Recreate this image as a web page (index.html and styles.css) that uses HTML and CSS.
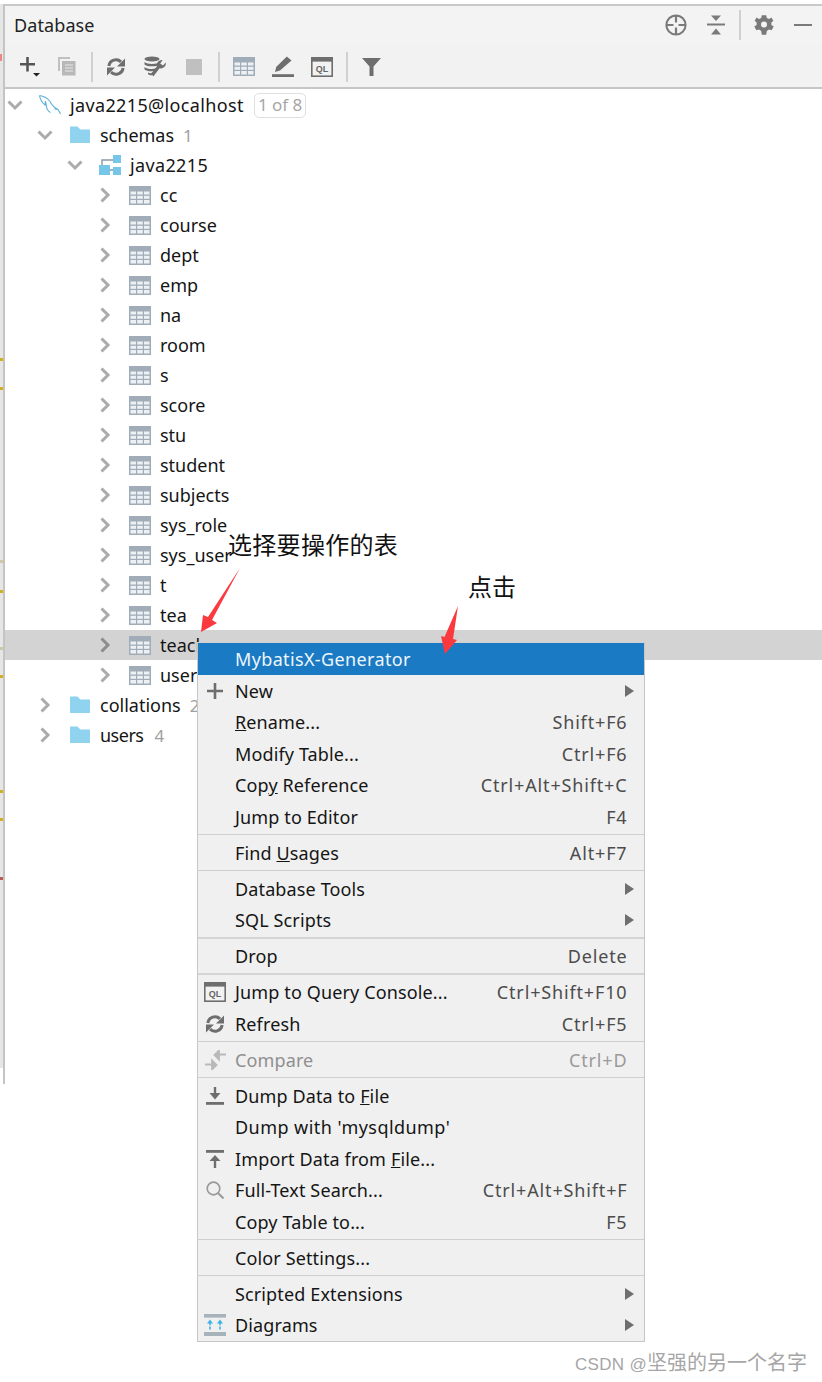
FILE: index.html
```html
<!DOCTYPE html>
<html lang="zh-CN">
<head>
<meta charset="utf-8">
<title>Database</title>
<link rel="stylesheet" href="styles.css">
</head>
<body>
<svg class="defs" width="0" height="0" aria-hidden="true">
  <defs>
    <symbol id="chev-r" viewBox="0 0 20 20"><path d="M6.5 3.5 L13 10 L6.5 16.5" fill="none" stroke="currentColor" stroke-width="3"/></symbol>
    <symbol id="chev-d" viewBox="0 0 20 20"><path d="M3.5 6.5 L10 13 L16.5 6.5" fill="none" stroke="currentColor" stroke-width="3"/></symbol>
    <symbol id="folder" viewBox="0 0 20 20"><path d="M-1 1.5 H7.5 L10.5 4.5 H21 V18 H-1 Z" fill="#8fd3ee"/></symbol>
    <symbol id="schema" viewBox="0 0 22 20"><path d="M14 0 H22 V8 H14 Z M0 10 H11 V20 H0 Z M14 12 H22 V20 H14 Z" fill="#75c6e8"/><path d="M3 10 V5 H14 M11 15 H14" fill="none" stroke="#8a98a3" stroke-width="1.4"/></symbol>
    <symbol id="table" viewBox="0 0 22 19"><rect width="22" height="19" fill="#a0adb8"/><g fill="#eef1f3"><rect x="1.5" y="5.5" width="5.5" height="3"/><rect x="8.2" y="5.5" width="5.6" height="3"/><rect x="15" y="5.5" width="5.5" height="3"/><rect x="1.5" y="9.8" width="5.5" height="3"/><rect x="8.2" y="9.8" width="5.6" height="3"/><rect x="15" y="9.8" width="5.5" height="3"/><rect x="1.5" y="14" width="5.5" height="3.5"/><rect x="8.2" y="14" width="5.6" height="3.5"/><rect x="15" y="14" width="5.5" height="3.5"/></g></symbol>
    <symbol id="refresh" viewBox="0 0 18 18"><path d="M1.9 8 A7.2 7.2 0 0 1 14 3.8 M16.1 10 A7.2 7.2 0 0 1 4 14.2" fill="none" stroke="currentColor" stroke-width="3"/><path d="M10 8.6 H18 V0.6 Z M8 9.4 H0 V17.4 Z" fill="currentColor"/></symbol>
    <symbol id="ql" viewBox="0 0 22 20"><rect x="0.8" y="0.8" width="20.4" height="18.4" fill="#f2f2f2" stroke="#6e6e6e" stroke-width="1.6"/><rect x="1" y="1" width="20" height="3.6" fill="#6e6e6e"/><text x="11" y="15" text-anchor="middle" class="ql-text">QL</text></symbol>
  </defs>
</svg>
<div class="screen">
  <div class="gutter">
    <i class="mark mark-red mark-1"></i>
    <i class="mark mark-y mark-2"></i>
    <i class="mark mark-y mark-3"></i>
    <i class="mark mark-t mark-4"></i>
    <i class="mark mark-y mark-5"></i>
    <i class="mark mark-t mark-6"></i>
    <i class="mark mark-y mark-7"></i>
    <i class="mark mark-y mark-8"></i>
    <i class="mark mark-y mark-9"></i>
    <i class="mark mark-dr mark-10"></i>
  </div>
  <main class="panel">
    <header class="title-bar">
      <span class="title">Database</span>
      <div class="title-actions">
        <svg class="ic-target" viewBox="0 0 22 22"><circle cx="11" cy="11" r="9.6" fill="none" stroke="#7a7a7a" stroke-width="2"/><path d="M11 2 V8.5 M11 13.5 V20 M2 11 H8.5 M13.5 11 H20" stroke="#7a7a7a" stroke-width="2.2"/></svg>
        <svg class="ic-collapse" viewBox="0 0 18 20"><path d="M0 9.5 H18" stroke="#7a7a7a" stroke-width="2"/><path d="M4 0.5 H14 L9 6 Z M4 19.5 H14 L9 13.5 Z" fill="#7a7a7a"/></svg>
        <span class="vsep vsep-title"></span>
        <svg class="ic-gear" viewBox="0 0 20 20"><path d="M7.8 0.3 H12.2 L12.8 3 L15 4 L17.4 2.6 L19.4 5.7 L17.4 7.5 V9.9 L19.7 11.6 L17.6 15.3 L15 14.4 L12.8 16 L12.2 19.7 H7.8 L7.2 16 L5 14.4 L2.4 15.3 L0.3 11.6 L2.6 9.9 V7.5 L0.6 5.7 L2.6 2.6 L5 4 L7.2 3 Z" fill="#7a7a7a"/><circle cx="10" cy="9.6" r="3" fill="#f3f3f3"/></svg>
        <span class="minus"></span>
      </div>
    </header>
    <div class="toolbar">
      <svg class="tb tb-plus" viewBox="0 0 20 20"><path d="M0 7.2 H15 M7.5 0 V14.5" stroke="#555" stroke-width="2.6"/><path d="M13 16 H20 L16.5 19.5 Z" fill="#222"/></svg>
      <svg class="tb tb-copy" viewBox="0 0 18 19"><path d="M1 14 V1 H12" fill="none" stroke="#c0c0c0" stroke-width="2"/><rect x="4" y="4" width="13.5" height="14.5" fill="#b8b8b8"/><path d="M7 8 H15 M7 11 H15 M7 14 H15" stroke="#e8e8e8" stroke-width="1.2"/></svg>
      <span class="vsep"></span>
      <svg class="tb tb-refresh"><use href="#refresh"/></svg>
      <svg class="tb tb-tools" viewBox="0 0 23 22"><ellipse cx="8" cy="3" rx="7.5" ry="2.6" fill="#6e6e6e"/><path d="M0.5 6 C3 8.5 13 8.5 15.5 6 V8.4 C13 11 3 11 0.5 8.4 Z M0.5 11 C3 13.4 9 13.4 11.5 12.6 V14.6 C8 15.6 3 15.4 0.5 13.4 Z M4 16.4 C5 17 7 17.4 8.5 17.3 L7.5 19.4 C6 19.2 5 18.8 4 18.2 Z" fill="#6e6e6e"/><path d="M21.8 6.5 A5 5 0 0 1 15.6 12.2 L9.5 20.2 L6.8 18 L13 10.2 A5 5 0 0 1 18.6 4 L16.2 7.4 L19 9.4 Z" fill="#6e6e6e"/></svg>
      <span class="tb-stop"></span>
      <span class="vsep vsep-b"></span>
      <svg class="tb tb-table"><use href="#table"/></svg>
      <svg class="tb tb-pen" viewBox="0 0 22 21"><path d="M14.8 0.5 L19.5 4.5 L8 14.5 L3 16 L4.2 11 Z" fill="#6e6e6e"/><rect y="18.2" width="22" height="2.8" fill="#6e6e6e"/></svg>
      <svg class="tb tb-ql"><use href="#ql"/></svg>
      <span class="vsep vsep-c"></span>
      <svg class="tb tb-filter" viewBox="0 0 19 18"><path d="M0 0 H19 L11.5 8.5 V18 H7.5 V8.5 Z" fill="#6e6e6e"/></svg>
    </div>
    <ul class="tree">
      <li class="row d0"><svg class="chev"><use href="#chev-d"/></svg><svg class="ric ric-db" viewBox="0 0 22 20"><path d="M0.5 0.5 C4 1 8 2.5 11 6.5 C13 10.5 15 12.5 19 14.5 L21.5 19 M19 14.5 L15.5 14 M0.5 0.5 C1 4 3 7.5 6 10 L6.5 6 L8 14 C9 15.5 10 17 11.5 17.5" fill="none" stroke="#5fb4dd" stroke-width="1.15"/></svg><span class="label wide">java2215@localhost</span><span class="badge">1 of 8</span></li>
      <li class="row d1"><svg class="chev"><use href="#chev-d"/></svg><svg class="ric"><use href="#folder"/></svg><span class="label">schemas</span><span class="count">1</span></li>
      <li class="row d2"><svg class="chev"><use href="#chev-d"/></svg><svg class="ric ric-s"><use href="#schema"/></svg><span class="label wide">java2215</span></li>
      <li class="row d3"><svg class="chev"><use href="#chev-r"/></svg><svg class="ric ric-t"><use href="#table"/></svg><span class="label">cc</span></li>
      <li class="row d3"><svg class="chev"><use href="#chev-r"/></svg><svg class="ric ric-t"><use href="#table"/></svg><span class="label">course</span></li>
      <li class="row d3"><svg class="chev"><use href="#chev-r"/></svg><svg class="ric ric-t"><use href="#table"/></svg><span class="label">dept</span></li>
      <li class="row d3"><svg class="chev"><use href="#chev-r"/></svg><svg class="ric ric-t"><use href="#table"/></svg><span class="label">emp</span></li>
      <li class="row d3"><svg class="chev"><use href="#chev-r"/></svg><svg class="ric ric-t"><use href="#table"/></svg><span class="label">na</span></li>
      <li class="row d3"><svg class="chev"><use href="#chev-r"/></svg><svg class="ric ric-t"><use href="#table"/></svg><span class="label">room</span></li>
      <li class="row d3"><svg class="chev"><use href="#chev-r"/></svg><svg class="ric ric-t"><use href="#table"/></svg><span class="label">s</span></li>
      <li class="row d3"><svg class="chev"><use href="#chev-r"/></svg><svg class="ric ric-t"><use href="#table"/></svg><span class="label">score</span></li>
      <li class="row d3"><svg class="chev"><use href="#chev-r"/></svg><svg class="ric ric-t"><use href="#table"/></svg><span class="label">stu</span></li>
      <li class="row d3"><svg class="chev"><use href="#chev-r"/></svg><svg class="ric ric-t"><use href="#table"/></svg><span class="label">student</span></li>
      <li class="row d3"><svg class="chev"><use href="#chev-r"/></svg><svg class="ric ric-t"><use href="#table"/></svg><span class="label">subjects</span></li>
      <li class="row d3"><svg class="chev"><use href="#chev-r"/></svg><svg class="ric ric-t"><use href="#table"/></svg><span class="label">sys_role</span></li>
      <li class="row d3"><svg class="chev"><use href="#chev-r"/></svg><svg class="ric ric-t"><use href="#table"/></svg><span class="label">sys_user</span></li>
      <li class="row d3"><svg class="chev"><use href="#chev-r"/></svg><svg class="ric ric-t"><use href="#table"/></svg><span class="label">t</span></li>
      <li class="row d3"><svg class="chev"><use href="#chev-r"/></svg><svg class="ric ric-t"><use href="#table"/></svg><span class="label">tea</span></li>
      <li class="row d3 selected"><svg class="chev"><use href="#chev-r"/></svg><svg class="ric ric-t"><use href="#table"/></svg><span class="label">teacher</span></li>
      <li class="row d3"><svg class="chev"><use href="#chev-r"/></svg><svg class="ric ric-t"><use href="#table"/></svg><span class="label">user</span></li>
      <li class="row d1"><svg class="chev"><use href="#chev-r"/></svg><svg class="ric"><use href="#folder"/></svg><span class="label">collations</span><span class="count">2</span></li>
      <li class="row d1"><svg class="chev"><use href="#chev-r"/></svg><svg class="ric"><use href="#folder"/></svg><span class="label tight">users</span><span class="count">4</span></li>
    </ul>
  </main>
</div>

<div class="menu">
  <div class="item active"><span class="mi"></span><span class="mt wide">MybatisX-Generator</span></div>
  <div class="item"><span class="mi"><svg class="mi-plus" viewBox="0 0 16 16"><path d="M0 8 H16 M8 0 V16" stroke="#6e6e6e" stroke-width="2.6"/></svg></span><span class="mt">New</span><span class="arrow"></span></div>
  <div class="item"><span class="mi"></span><span class="mt"><u>R</u>ename...</span><span class="sc">Shift+F6</span></div>
  <div class="item"><span class="mi"></span><span class="mt">Modify Table...</span><span class="sc">Ctrl+F6</span></div>
  <div class="item"><span class="mi"></span><span class="mt">Cop<u>y</u> Reference</span><span class="sc">Ctrl+Alt+Shift+C</span></div>
  <div class="item"><span class="mi"></span><span class="mt">Jump to Editor</span><span class="sc">F4</span></div>
  <div class="sep"></div>
  <div class="item"><span class="mi"></span><span class="mt">Find <u>U</u>sages</span><span class="sc">Alt+F7</span></div>
  <div class="sep"></div>
  <div class="item"><span class="mi"></span><span class="mt">Database Tools</span><span class="arrow"></span></div>
  <div class="item"><span class="mi"></span><span class="mt">SQL Scripts</span><span class="arrow"></span></div>
  <div class="sep sep-thick"></div>
  <div class="item"><span class="mi"></span><span class="mt">Drop</span><span class="sc">Delete</span></div>
  <div class="sep sep-thick"></div>
  <div class="item"><span class="mi"><svg class="mi-ql"><use href="#ql"/></svg></span><span class="mt">Jump to Query Console...</span><span class="sc">Ctrl+Shift+F10</span></div>
  <div class="item"><span class="mi"><svg class="mi-refresh"><use href="#refresh"/></svg></span><span class="mt">Refresh</span><span class="sc">Ctrl+F5</span></div>
  <div class="sep"></div>
  <div class="item disabled"><span class="mi"><svg class="mi-compare" viewBox="0 0 21 20"><path d="M21 4.5 H14 M14 0.5 L9.5 5 L14 9.5 Z M0 14.5 H7 M7 10.5 L11.5 15 L7 19.5 Z" stroke="#b9b9b9" stroke-width="1.8" fill="#b9b9b9"/></svg></span><span class="mt">Compare</span><span class="sc">Ctrl+D</span></div>
  <div class="sep"></div>
  <div class="item"><span class="mi"><svg class="mi-io" viewBox="0 0 18 18"><path d="M9 0 V9" stroke="#6e6e6e" stroke-width="2.4"/><path d="M3.5 6 H14.5 L9 12.5 Z" fill="#6e6e6e"/><rect y="15" width="18" height="2.8" fill="#6e6e6e"/></svg></span><span class="mt">Dump Data to <u>F</u>ile</span></div>
  <div class="item"><span class="mi"></span><span class="mt wider">Dump with 'mysqldump'</span></div>
  <div class="item"><span class="mi"><svg class="mi-io" viewBox="0 0 18 18"><rect width="18" height="2.8" fill="#6e6e6e"/><path d="M3.5 11 H14.5 L9 5 Z" fill="#6e6e6e"/><path d="M9 9 V18" stroke="#6e6e6e" stroke-width="2.4"/></svg></span><span class="mt">Import Data from <u>F</u>ile...</span></div>
  <div class="item"><span class="mi"><svg class="mi-io" viewBox="0 0 18 18"><circle cx="7.5" cy="7.5" r="6.3" fill="none" stroke="#9a9a9a" stroke-width="1.7"/><path d="M12 12 L17.5 17.5" stroke="#9a9a9a" stroke-width="2"/></svg></span><span class="mt">Full-Text Search...</span><span class="sc">Ctrl+Alt+Shift+F</span></div>
  <div class="item"><span class="mi"></span><span class="mt">Copy Table to...</span><span class="sc">F5</span></div>
  <div class="sep"></div>
  <div class="item"><span class="mi"></span><span class="mt">Color Settings...</span></div>
  <div class="sep"></div>
  <div class="item"><span class="mi"></span><span class="mt">Scripted Extensions</span><span class="arrow"></span></div>
  <div class="item"><span class="mi"><svg class="mi-diag" viewBox="0 0 22 22"><rect width="22" height="3.6" fill="#a7b3bb"/><rect y="18" width="22" height="4" fill="#a7b3bb"/><path d="M6 15.5 V8 M16 15.5 V8" stroke="#3fb2ea" stroke-width="1.6" stroke-dasharray="3 1.2"/><path d="M3 9.5 H9 L6 5.5 Z M13 9.5 H19 L16 5.5 Z" fill="#3fb2ea"/></svg></span><span class="mt">Diagrams</span><span class="arrow"></span></div>
</div>

<span class="note note-select">选择要操作的表</span>
<span class="note note-click">点击</span>
<svg class="marks" viewBox="0 0 822 1382">
  <polygon points="240,568 208,617 203,615 201,632 217,623 212,620" fill="#fb3a3f"/>
  <polygon points="458,606 453,639 457,640 445,654 441,636 444.5,637" fill="#fb3a3f"/>
</svg>
<span class="watermark"><span class="wm-latin">CSDN @</span>坚强的另一个名字</span>
</body>
</html>
```
FILE: styles.css
```css
* { box-sizing: border-box; }
html, body { margin: 0; padding: 0; background: #fff; }
body {
  width: 822px;
  height: 1382px;
  overflow: hidden;
  position: relative;
  font-family: "Noto Sans", "Noto Sans CJK SC", sans-serif;
  font-size: 18px;
  color: #151515;
}
.defs { position: absolute; }
.ql-text { font: 700 9px "Liberation Sans", sans-serif; fill: #666; }

.screen { display: flex; height: 100%; }

/* left gutter strip of the neighbouring editor */
.gutter {
  position: relative;
  flex: 0 0 5px;
  height: 1080px;
  margin-top: 4px;
  border-right: 2px solid #c4c4c4;
  background: linear-gradient(#e6e6e6, #e6e6e6) 0 0 / 3px 1064px no-repeat;
}
.mark { position: absolute; left: 0; width: 3px; height: 3px; }
.mark-red { background: #e88; width: 1.5px; height: 7px; }
.mark-y { background: #d1b21c; }
.mark-t { background: #cfc9a5; }
.mark-dr { background: #b85c55; }
.mark-1 { top: 50px; }
.mark-2 { top: 354px; }
.mark-3 { top: 383px; }
.mark-4 { top: 556px; }
.mark-5 { top: 586px; }
.mark-6 { top: 643px; }
.mark-7 { top: 671px; }
.mark-8 { top: 786px; }
.mark-9 { top: 814px; }
.mark-10 { top: 873px; }

.panel { flex: 1; display: flex; flex-direction: column; padding-top: 4px; min-width: 0; }

.title-bar {
  height: 40px;
  border-top: 2px solid #c9c9c9;
  background: #f3f3f3;
  display: flex;
  align-items: center;
  justify-content: space-between;
  padding: 0 10px 0 9px;
}
.title { color: #222; letter-spacing: 0.1px; }
.title-actions { display: flex; align-items: center; }
.ic-target { width: 22px; height: 22px; margin-right: 20px; }
.ic-collapse { width: 18px; height: 20px; margin-right: 14px; }
.vsep { flex: none; width: 2px; height: 30px; background: #d0d0d0; }
.vsep-title { margin-right: 13px; }
.ic-gear { width: 20px; height: 20px; margin-right: 20px; }
.minus { width: 18px; height: 2.5px; background: #7a7a7a; }

.toolbar {
  height: 45px;
  background: #f2f2f2;
  border-bottom: 2px solid #c6c6c6;
  display: flex;
  align-items: center;
  padding: 2px 0 0 15px;
}
.tb { flex: none; display: block; }
.tb-plus { width: 20px; height: 20px; }
.tb-copy { width: 18px; height: 19px; margin-left: 18px; }
.toolbar .vsep { margin-left: 15px; }
.tb-refresh { width: 18px; height: 18px; margin-left: 14px; color: #6e6e6e; }
.tb-tools { width: 23px; height: 22px; margin-left: 19px; }
.tb-stop { flex: none; width: 16px; height: 16px; margin-left: 19px; background: #c0c0c0; }
.toolbar .vsep-b { margin-left: 16px; }
.tb-table { width: 22px; height: 19px; margin-left: 13px; }
.tb-pen { width: 22px; height: 21px; margin-left: 17px; }
.tb-ql { width: 22px; height: 20px; margin-left: 17px; }
.toolbar .vsep-c { margin-left: 13px; }
.tb-filter { width: 19px; height: 18px; margin-left: 14px; }

.tree { list-style: none; margin: 0; padding: 1px 0 0; }
.row { height: 30px; display: flex; align-items: center; white-space: nowrap; }
.row.d1 { padding-left: 30px; }
.row.d2 { padding-left: 60px; }
.row.d3 { padding-left: 90px; }
.row.selected { background: #d3d3d3; }
.chev { flex: none; width: 20px; height: 20px; color: #ababab; }
.selected .chev { color: #8c8c8c; }
.ric { flex: none; width: 20px; height: 20px; margin: 0 10px 0 15px; overflow: visible; }
.ric-db { width: 22px; height: 20px; margin: 0 9px 0 14px; }
.ric-s { width: 22px; height: 20px; margin: 0 9px 0 14px; }
.ric-t { width: 22px; height: 19px; margin: 0 9px 0 14px; }
.label { line-height: 30px; }
.wide { letter-spacing: 0.36px; }
.wider { letter-spacing: 0.45px; }
.tight { letter-spacing: -0.5px; margin-right: 2px; }
.count { margin-left: 9px; color: #a0a0a0; font-size: 17px; }
.badge {
  margin-left: 10px;
  height: 25px;
  line-height: 22px;
  padding: 0 3px;
  border: 1.5px solid #dfdfdf;
  border-radius: 5px;
  color: #a6a6a6;
  font-size: 17px;
}

.menu {
  position: absolute;
  left: 197px;
  top: 642px;
  width: 448px;
  background: #f0f0f0;
  border: 1px solid #c6c6c6;
  border-top-color: #d0d0d0;
  padding: 0.3px 0 0.2px;
}
.item {
  height: 31.5px;
  display: flex;
  align-items: center;
  padding: 0 17px 0 6px;
  white-space: nowrap;
}
.item.active { background: #1b7ac4; color: #eef6fc; }
.item.disabled { color: #8f8f8f; }
.item.disabled .sc { color: #9a9a9a; }
.mi { flex: none; width: 22px; height: 22px; margin-right: 9px; display: flex; align-items: center; justify-content: center; }
.mi-plus { width: 16px; height: 16px; }
.mi-ql { width: 22px; height: 20px; }
.mi-refresh { width: 18px; height: 18px; color: #6e6e6e; }
.mi-compare { width: 21px; height: 20px; }
.mi-io { width: 18px; height: 18px; }
.mi-diag { width: 22px; height: 22px; }
.mt { flex: 1; letter-spacing: 0.13px; }
.mt.wide { letter-spacing: 0.36px; }
.mt.wider { letter-spacing: 0.45px; }
.sc { color: #4c4c4c; letter-spacing: 0.85px; margin-right: -0.5px; }
.arrow {
  width: 0;
  height: 0;
  margin-right: -7px;
  border-left: 9px solid #6e6e6e;
  border-top: 6px solid transparent;
  border-bottom: 6px solid transparent;
}
.sep { height: 4.5px; display: flex; align-items: center; }
.sep::before { content: ""; flex: 1; height: 1px; background: #cfcfcf; }
.sep-thick::before { height: 2px; background: #d4d4d4; }

.note {
  position: absolute;
  font-family: "Noto Sans CJK SC", sans-serif;
  font-size: 24px;
  line-height: 32px;
  color: #111;
  white-space: nowrap;
}
.note-select { left: 228px; top: 528px; letter-spacing: 0.3px; }
.note-click { left: 468px; top: 570px; }
.marks { position: absolute; left: 0; top: 0; width: 822px; height: 1382px; pointer-events: none; }
.watermark {
  position: absolute;
  right: 15px;
  top: 1349px;
  font-family: "Liberation Sans", "Noto Sans CJK SC", sans-serif;
  font-size: 20px;
  line-height: 28px;
  color: #a6a6a6;
  white-space: nowrap;
}
.wm-latin { font-size: 17px; letter-spacing: 0.3px; }
```
